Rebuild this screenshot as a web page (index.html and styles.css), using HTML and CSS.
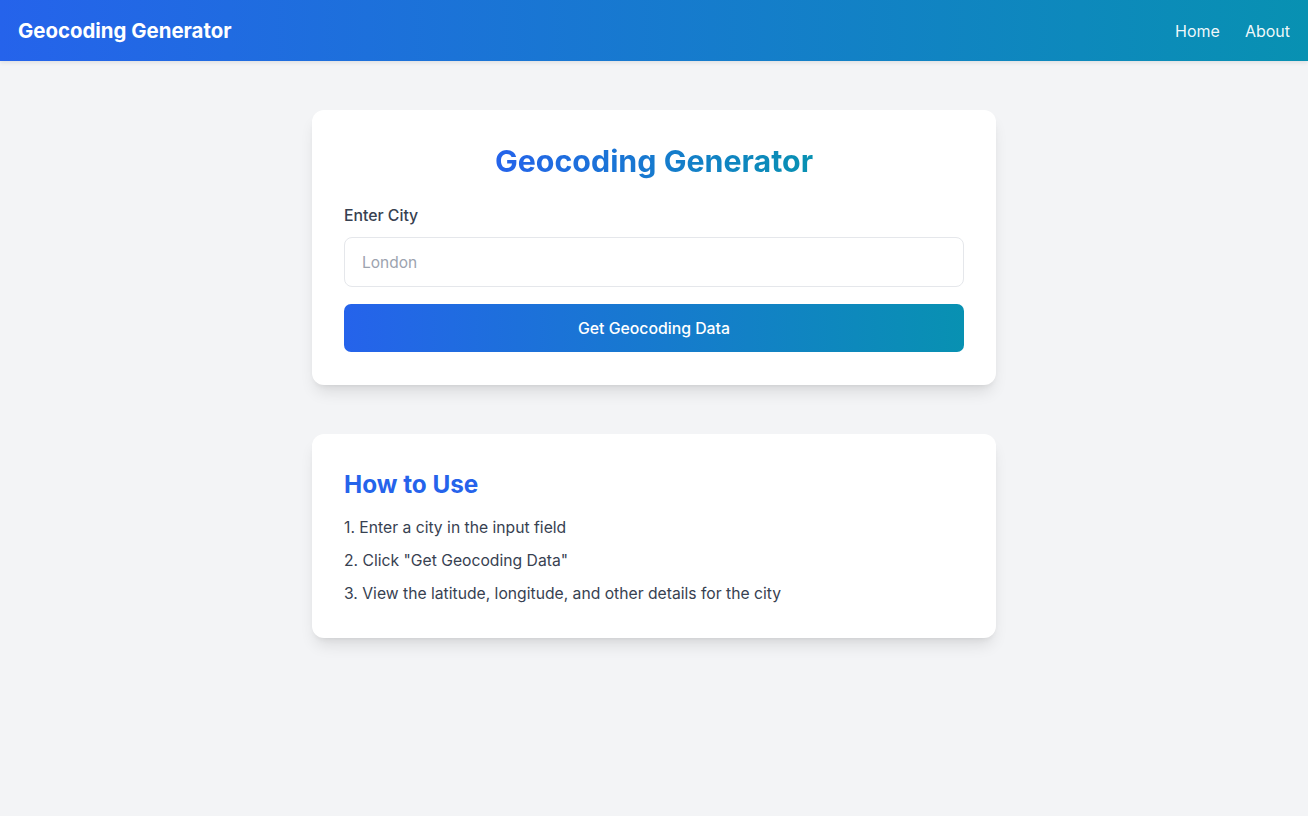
FILE: index.html
```html
<!DOCTYPE html>
<html lang="en">
<head>
<meta charset="utf-8">
<title>Geocoding Generator</title>
<link rel="stylesheet" href="styles.css">
</head>
<body>
<header class="navbar">
  <div class="brand">Geocoding Generator</div>
  <nav class="nav-links">
    <a href="#" class="nav-link">Home</a>
    <a href="#" class="nav-link">About</a>
  </nav>
</header>
<main class="main">
  <section class="card form-card">
    <h1 class="card-title">Geocoding Generator</h1>
    <label class="field-label" for="city">Enter City</label>
    <input id="city" class="field-input" type="text" placeholder="London">
    <button class="submit-btn" type="button">Get Geocoding Data</button>
  </section>
  <section class="card help-card">
    <h2 class="help-title">How to Use</h2>
    <ol class="steps">
      <li>1. Enter a city in the input field</li>
      <li>2. Click "Get Geocoding Data"</li>
      <li>3. View the latitude, longitude, and other details for the city</li>
    </ol>
  </section>
</main>
</body>
</html>
```

FILE: styles.css
```css
* { box-sizing: border-box; }

html, body {
  margin: 0;
  padding: 0;
}

body {
  min-height: 816px;
  background: #f3f4f6;
  font-family: Inter, "Noto Sans", "Liberation Sans", sans-serif;
  color: #374151;
}

.navbar {
  height: 61px;
  display: flex;
  align-items: center;
  justify-content: space-between;
  padding: 0 18px;
  background: linear-gradient(90deg, #2563eb 0%, #0891b2 100%);
  box-shadow: 0 2px 4px rgba(0, 0, 0, 0.08);
}

.brand {
  color: #ffffff;
  font-size: 20.4px;
  font-weight: 700;
}

.nav-links {
  display: flex;
  gap: 25px;
}

.nav-link {
  color: rgba(255, 255, 255, 0.95);
  text-decoration: none;
  font-size: 16px;
}

.main {
  display: flex;
  flex-direction: column;
  align-items: center;
  gap: 49px;
  padding-top: 49px;
}

.card {
  width: 684px;
  background: #ffffff;
  border-radius: 12px;
  box-shadow: 0 10px 15px -3px rgba(0, 0, 0, 0.1), 0 4px 6px -4px rgba(0, 0, 0, 0.1);
  padding: 33px 32px;
}

.form-card {
  display: flex;
  flex-direction: column;
}

.card-title {
  margin: 0 0 27px;
  text-align: center;
  font-size: 30.4px;
  line-height: 36px;
  font-weight: 700;
  background: linear-gradient(90deg, #2563eb 0%, #0891b2 100%);
  -webkit-background-clip: text;
  background-clip: text;
  color: transparent;
  align-self: center;
}

.field-label {
  font-size: 15.8px;
  line-height: 20px;
  font-weight: 500;
  color: #374151;
  margin-bottom: 11px;
}

.field-input {
  height: 50px;
  width: 100%;
  border: 1px solid #e5e7eb;
  border-radius: 8px;
  padding: 0 17px;
  font-family: inherit;
  font-size: 15.5px;
  color: #111827;
  outline: none;
  background: #ffffff;
}

.field-input::placeholder {
  color: #9ca3af;
}

.submit-btn {
  margin-top: 17px;
  height: 48px;
  width: 100%;
  border: none;
  border-radius: 7px;
  background: linear-gradient(90deg, #2563eb 0%, #0891b2 100%);
  color: #ffffff;
  font-family: inherit;
  font-size: 15.8px;
  font-weight: 500;
  cursor: pointer;
}

.help-title {
  margin: 0 0 16px;
  font-size: 24.3px;
  line-height: 32px;
  font-weight: 700;
  color: #2563eb;
  padding-top: 1px;
}

.steps {
  list-style: none;
  margin: 0;
  padding: 0;
  display: flex;
  flex-direction: column;
  gap: 9px;
}

.steps li {
  font-size: 15.7px;
  line-height: 24px;
  color: #374151;
}

.help-card {
  padding-bottom: 32px;
}
```
